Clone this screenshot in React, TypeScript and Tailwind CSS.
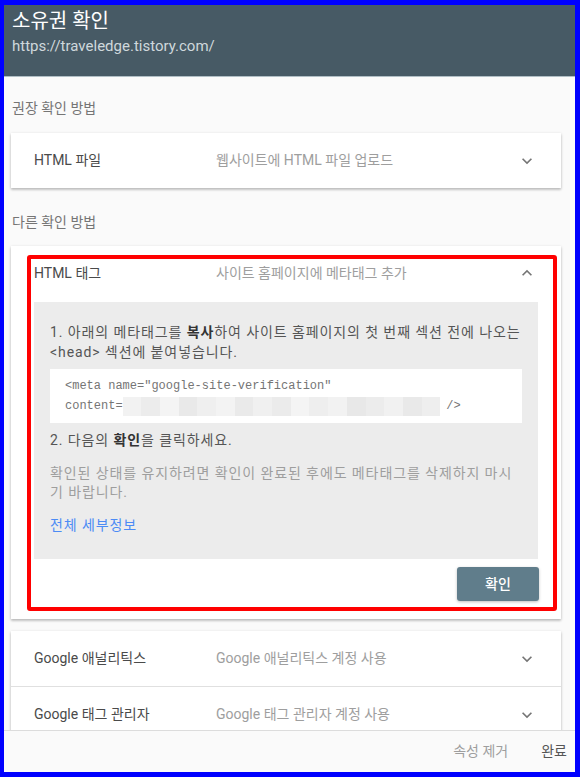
import { ReactNode } from 'react';

// grey shades for the pixelated (hidden) verification token
const blur = [
  'bg-[#f2f2f2]', 'bg-[#ececec]', 'bg-[#f4f4f4]', 'bg-[#e9e9e9]', 'bg-[#efefef]',
  'bg-[#f3f3f3]', 'bg-[#eaeaea]', 'bg-[#f0f0f0]', 'bg-[#ebebeb]', 'bg-[#f4f4f4]',
  'bg-[#eeeeee]', 'bg-[#f2f2f2]', 'bg-[#e8e8e8]', 'bg-[#ececec]', 'bg-[#f1f1f1]',
  'bg-[#e9e9e9]', 'bg-[#eeeeee]',
];

function Chevron({ up = false }: { up?: boolean }) {
  return (
    <svg width="20" height="20" viewBox="0 0 24 24" className={up ? 'rotate-180' : ''}>
      <path d="M7.41 8.59L12 13.17l4.59-4.58L18 10l-6 6-6-6 1.41-1.41z" fill="#757575" />
    </svg>
  );
}

function Row({ title, desc, up }: { title: string; desc: string; up?: boolean }) {
  return (
    <div className="flex h-[55px] items-center pl-[23px] pr-[24px] text-[14px]">
      <span className="w-[182px] text-[#4a4a4a]">{title}</span>
      <span className="flex-1 text-[#9e9e9e]">{desc}</span>
      <Chevron up={up} />
    </div>
  );
}

function Label({ children }: { children: ReactNode }) {
  return <div className="h-[20px] pl-[1px] text-[14px] leading-[20px] text-[#757575]">{children}</div>;
}

export default function App() {
  return (
    <div className="h-[777px] w-[580px] bg-[#0000ff] pb-[5px] pl-[4px] pr-[5px] pt-[5px] font-[Roboto,'Noto_Sans_CJK_KR',sans-serif]">
      <div className="flex h-full flex-col overflow-hidden bg-[#fafafa]">
        {/* header */}
        <div className="h-[72px] shrink-0 border-b border-[#b0bec5] bg-[#475a65] px-[8px] pt-[3px]">
          <div className="text-[20px] leading-[27px] text-white">소유권 확인</div>
          <div className="mt-[1px] text-[15px] leading-[20px] text-[#cfd8dc]">https://traveledge.tistory.com/</div>
        </div>

        {/* body */}
        <div className="flex-1 overflow-hidden pl-[7px] pr-[14px] pt-[21px]">
          <Label>권장 확인 방법</Label>
          <div className="mt-[15px] bg-white shadow-[0_1px_3px_rgba(0,0,0,0.2),0_2px_2px_rgba(0,0,0,0.12)]">
            <Row title="HTML 파일" desc="웹사이트에 HTML 파일 업로드" />
          </div>

          <div className="mt-[24px]">
            <Label>다른 확인 방법</Label>
          </div>

          <div className="relative mt-[14px] bg-white shadow-[0_1px_3px_rgba(0,0,0,0.2),0_2px_2px_rgba(0,0,0,0.12)]">
            <div className="flex h-[52px] items-center pl-[23px] pr-[24px] pt-[2px] text-[14px]">
              <span className="w-[182px] text-[#4a4a4a]">HTML 태그</span>
              <span className="flex-1 text-[#9e9e9e]">사이트 홈페이지에 메타태그 추가</span>
              <Chevron up />
            </div>
            <div className="mx-[23px] mt-[4px] bg-[#ececec] px-[16px] pb-[24px] pt-[20px] text-[14px] leading-[20px] tracking-[0.9px] text-[#555555]">
              <p>
                1. 아래의 메타태그를 <b className="font-bold text-[#333333]">복사</b>하여 사이트 홈페이지의 첫 번째 섹션 전에 나오는
                &lt;head&gt; 섹션에 붙여넣습니다.
              </p>
              <div className="mt-[7px] bg-white px-[15px] py-[7px] font-['Liberation_Mono',monospace] text-[12px] leading-[20px] tracking-normal text-[#757575]">
                <div>&lt;meta name="google-site-verification"</div>
                <div className="flex items-center">
                  <span>content=</span>
                  <span className="mr-[6px] flex h-[19px]">
                    {blur.map((c, i) => (
                      <span key={i} className={`h-full w-[18.7px] ${c}`} />
                    ))}
                  </span>
                  <span>/&gt;</span>
                </div>
              </div>
              <p className="mt-[7px]">
                2. 다음의 <b className="font-bold text-[#333333]">확인</b>을 클릭하세요.
              </p>
              <p className="mt-[14px] leading-[19px] text-[#9e9e9e]">
                확인된 상태를 유지하려면 확인이 완료된 후에도 메타태그를 삭제하지 마시
                <br />기 바랍니다.
              </p>
              <p className="mt-[13px] text-[#4c8bf5]">전체 세부정보</p>
            </div>
            <div className="flex justify-end pb-[18px] pr-[22px] pt-[8px]">
              <button className="h-[34px] w-[82px] rounded-[3px] bg-[#607d8b] text-[14px] font-medium text-white shadow-[0_1px_3px_rgba(0,0,0,0.25)]">
                확인
              </button>
            </div>
            {/* red annotation box */}
            <div className="pointer-events-none absolute left-[16px] top-[9px] h-[356px] w-[530px] rounded-[3px] border-4 border-[#ff0000]" />
          </div>

          <div className="mt-[12px] bg-white shadow-[0_1px_3px_rgba(0,0,0,0.2),0_2px_2px_rgba(0,0,0,0.12)]">
            <Row title="Google 애널리틱스" desc="Google 애널리틱스 계정 사용" />
            <div className="border-t border-[#e0e0e0]">
              <Row title="Google 태그 관리자" desc="Google 태그 관리자 계정 사용" />
            </div>
          </div>
        </div>

        {/* footer */}
        <div className="flex h-[42px] shrink-0 items-center justify-end gap-[33px] border-t border-[#dcdcdc] bg-[#fafafa] pr-[8px] text-[14px]">
          <span className="text-[#9e9e9e]">속성 제거</span>
          <span className="text-[#555555]">완료</span>
        </div>
      </div>
    </div>
  );
}
